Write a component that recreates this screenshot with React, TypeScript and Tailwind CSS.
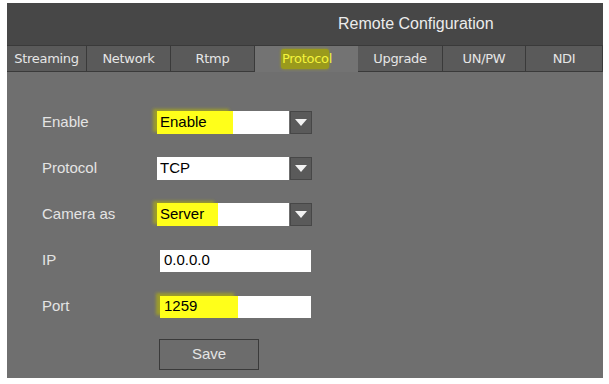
import React from "react";

const tabs = [
  { name: "Streaming", w: "w-[80px]" },
  { name: "Network", w: "w-[84px]" },
  { name: "Rtmp", w: "w-[84px]" },
  { name: "Protocol", w: "w-[103px]", active: true },
  { name: "Upgrade", w: "w-[85px]" },
  { name: "UN/PW", w: "w-[83px]" },
  { name: "NDI", w: "w-[77px]" },
];

function Arrow() {
  return (
    <div className="w-[22px] h-[23px] bg-[#5a5a5a] border border-[#474747] flex items-center justify-center">
      <svg width="12" height="7" viewBox="0 0 12 7">
        <polygon points="0,0 12,0 6,7" fill="#f2f2f2" />
      </svg>
    </div>
  );
}

function Select({ value, hl, pad }: { value: string; hl?: boolean; pad?: string }) {
  return (
    <div className="flex items-center gap-px">
      <div className="w-[132px] h-[23px] bg-white flex items-center">
        {hl ? (
          <span
            className={`h-full flex items-center pl-[3px] ${pad} bg-[#ffff1a] shadow-[-4px_-2px_3px_#9c9c2a] text-[15px] text-black`}
          >
            {value}
          </span>
        ) : (
          <span className="pl-[3px] text-[15px] text-black">{value}</span>
        )}
      </div>
      <Arrow />
    </div>
  );
}

function Input({ value, hl }: { value: string; hl?: boolean }) {
  return (
    <div className="ml-[3px] w-[151px] h-[22px] bg-white flex items-center">
      {hl ? (
        <span className="h-full flex items-center pl-[4px] pr-[41px] bg-[#ffff1a] shadow-[-4px_-3px_3px_#9c9c2a] text-[15px] text-black">
          {value}
        </span>
      ) : (
        <span className="pl-[4px] text-[15px] text-black">{value}</span>
      )}
    </div>
  );
}

function Row({ label, children }: { label: string; children: React.ReactNode }) {
  return (
    <div className="flex items-center h-[23px]">
      <div className="w-[115px] text-[15px] text-[#e4e4e4]">{label}</div>
      {children}
    </div>
  );
}

export default function App() {
  return (
    <div className="w-[609px] h-[384px] bg-white pt-[3px] pl-[7px] [font-family:'Liberation_Sans',Arial,sans-serif]">
      <div className="w-[596px] h-[375px] flex flex-col">
        <div className="h-[42px] bg-[#474747] flex items-center pl-[331px] text-[16px] text-[#ececec]">
          Remote Configuration
        </div>
        <div className="h-[27px] flex bg-[#5a5a5a] border-t border-[#3a3a3a]">
          {tabs.map((t) =>
            t.active ? (
              <div
                key={t.name}
                className={`${t.w} bg-[#737373] flex items-center justify-center text-[13px] [font-family:'DejaVu_Sans',sans-serif] tracking-[-0.3px]`}
              >
                <span className="bg-[#9a9a1c] text-[#f4f43c] pl-[1px] rounded-[3px] shadow-[0_0_3px_#9a9a1c]">
                  Protoco
                </span>
                <span className="text-[#f4f43c]">l</span>
              </div>
            ) : (
              <div
                key={t.name}
                className={`${t.w} border-r border-b border-[#3a3a3a] flex items-center justify-center text-[13px] text-[#e6e6e6] [font-family:'DejaVu_Sans',sans-serif] tracking-[-0.3px]`}
              >
                {t.name}
              </div>
            )
          )}
        </div>
        <div className="flex-1 bg-[#6f6f6f] pl-[35px] pt-[39px] flex flex-col">
          <div className="flex flex-col gap-[23px]">
            <Row label="Enable">
              <Select value="Enable" hl pad="pr-[26px]" />
            </Row>
            <Row label="Protocol">
              <Select value="TCP" />
            </Row>
            <Row label="Camera as">
              <Select value="Server" hl pad="pr-[14px]" />
            </Row>
            <Row label="IP">
              <Input value="0.0.0.0" />
            </Row>
            <Row label="Port">
              <Input value="1259" hl />
            </Row>
          </div>
          <div className="pl-[117px] mt-[21px]">
            <div className="w-[100px] h-[31px] border border-[#3a3a3a] bg-[#6c6c6c] flex items-center justify-center text-[15px] text-[#e4e4e4]">
              Save
            </div>
          </div>
        </div>
      </div>
    </div>
  );
}
